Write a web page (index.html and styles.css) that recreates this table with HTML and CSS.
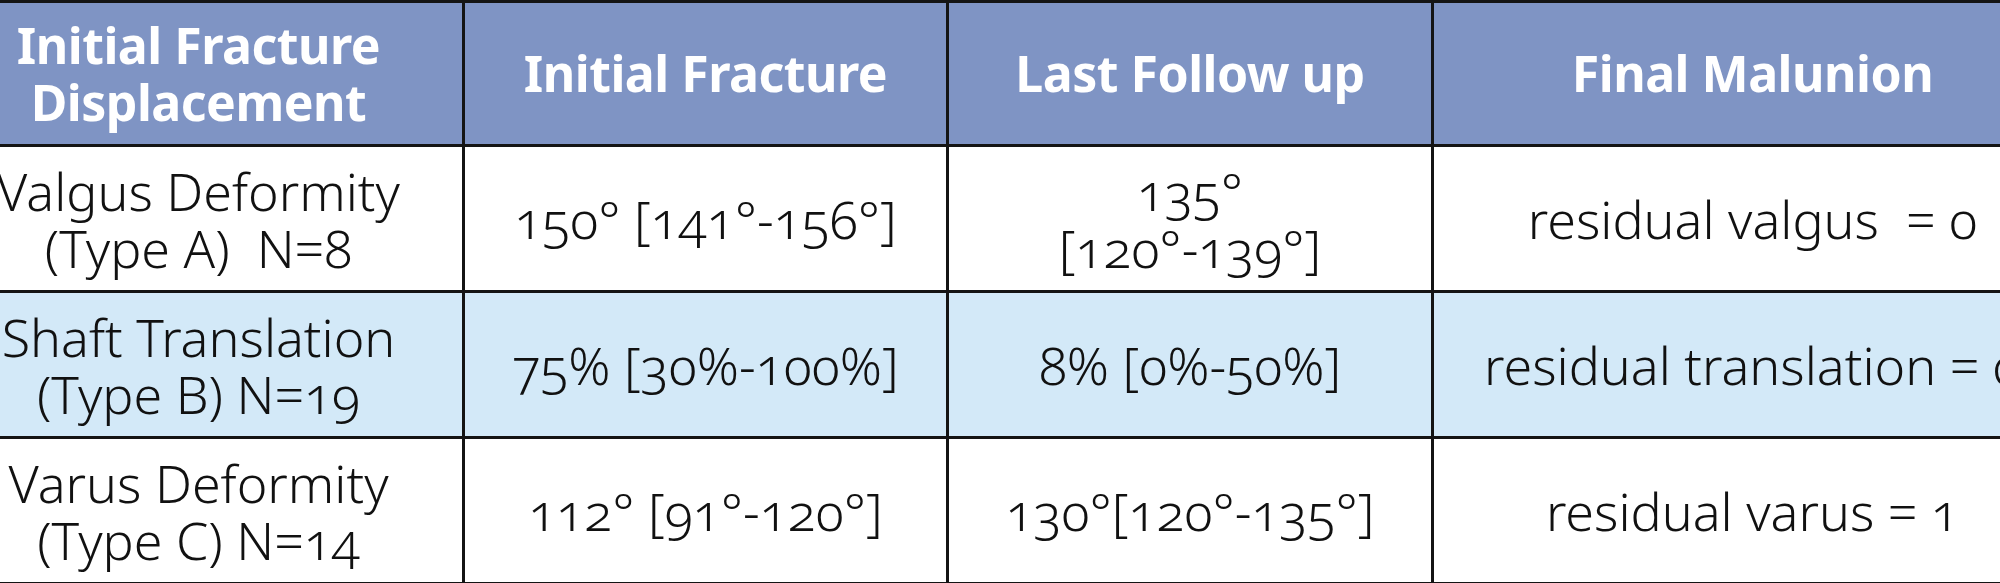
FILE: index.html
```html
<!DOCTYPE html>
<html lang="en">
<head>
  <meta charset="UTF-8" />
  <meta name="viewport" content="width=device-width, initial-scale=1.0" />
  <title>Fracture Displacement</title>
  <link rel="stylesheet" href="styles.css">
</head>
<body>
  <table class="results">
    <colgroup>
      <col class="col-type">
      <col class="col-initial">
      <col class="col-last">
      <col class="col-final">
    </colgroup>
    <thead>
      <tr>
        <th>Initial Fracture<br>Displacement</th>
        <th>Initial Fracture</th>
        <th>Last Follow up</th>
        <th>Final Malunion</th>
      </tr>
    </thead>
    <tbody>
      <tr>
        <td>Valgus Deformity<br>(Type A)&nbsp; N=8</td>
        <td>150° [141°-156°]</td>
        <td>135°<br>[120°-139°]</td>
        <td>residual valgus&nbsp; = 0</td>
      </tr>
      <tr class="shaded">
        <td>Shaft Translation<br>(Type B) N=19</td>
        <td>75% [30%-100%]</td>
        <td>8% [0%-50%]</td>
        <td>residual translation = 0</td>
      </tr>
      <tr>
        <td>Varus Deformity<br>(Type C) N=14</td>
        <td>112° [91°-120°]</td>
        <td>130°[120°-135°]</td>
        <td>residual varus = 1</td>
      </tr>
    </tbody>
  </table>
</body>
</html>
```

FILE: styles.css
```css
/* Page */
body {
  margin: 0;
  background: #fff;
  overflow: hidden;
  font-family: "Noto Sans", "Open Sans", sans-serif;
  color: #111;
}

/* Table */
.results {
  border-collapse: collapse;
  table-layout: fixed;
  width: 2139px;
  margin-left: -68px;
  font-variant-numeric: oldstyle-nums;
}

.col-type { width: 530px; }
.col-initial { width: 484px; }
.col-last { width: 485px; }
.col-final { width: 640px; }

.results th,
.results td {
  border: 3px solid #141414;
  text-align: center;
  vertical-align: middle;
  padding: 0;
  white-space: nowrap;
}

.results th {
  height: 141px;
  background: #7f94c4;
  color: #fff;
  font-size: 50px;
  font-weight: 700;
  line-height: 57px;
  letter-spacing: -0.5px;
}

.results td {
  height: 143px;
  font-size: 52px;
  font-weight: 300;
  line-height: 57px;
}

.results tr.shaded td {
  background: #d3e9f8;
}
```
